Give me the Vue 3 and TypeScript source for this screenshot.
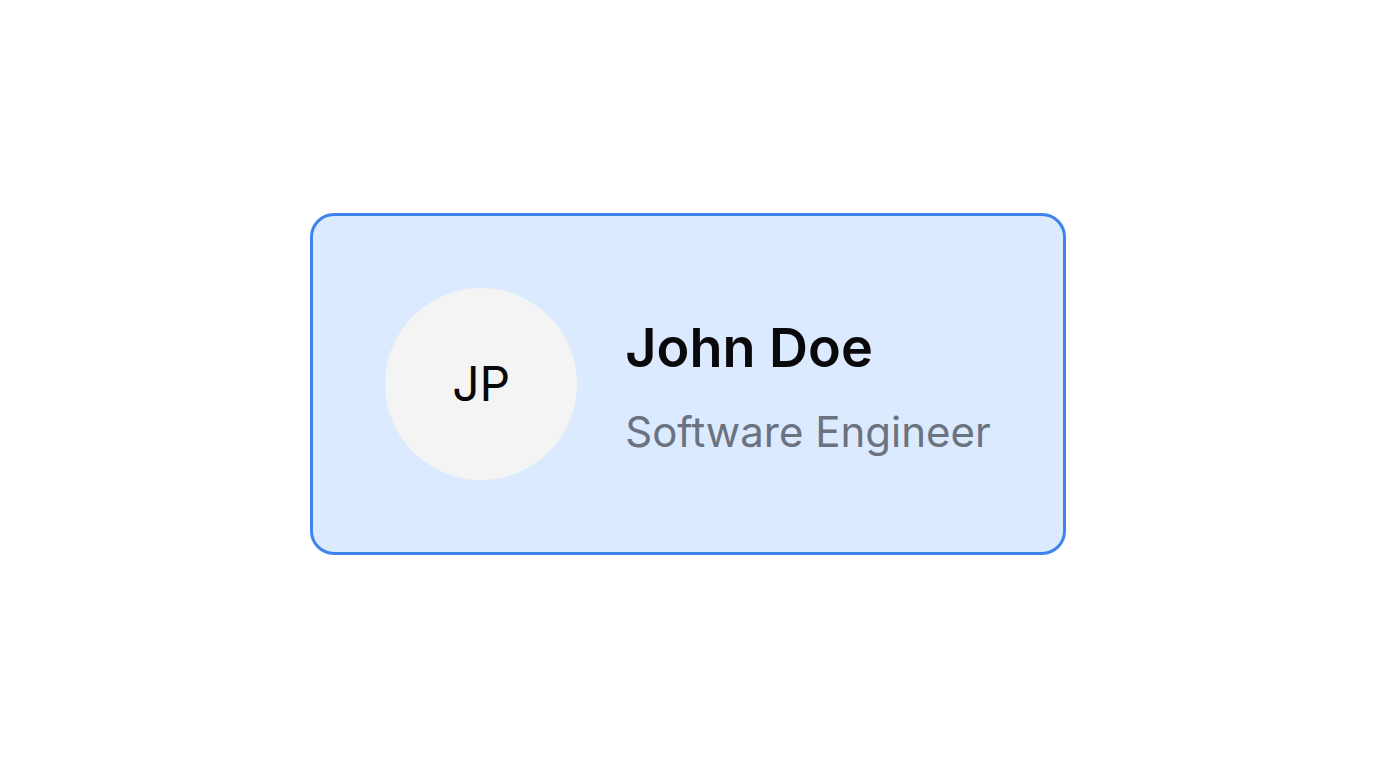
<script setup lang="ts">
interface Person {
  initials: string
  name: string
  role: string
}

const person: Person = {
  initials: 'JP',
  name: 'John Doe',
  role: 'Software Engineer',
}
</script>

<template>
  <main class="page">
    <article class="card">
      <div class="avatar" aria-hidden="true">{{ person.initials }}</div>
      <div class="details">
        <h1 class="name">{{ person.name }}</h1>
        <p class="role">{{ person.role }}</p>
      </div>
    </article>
  </main>
</template>

<style>
body {
  margin: 0;
  background: #ffffff;
}
</style>

<style scoped>
.page {
  min-height: 100vh;
  display: flex;
  align-items: center;
  justify-content: center;
  font-family: Inter, "Liberation Sans", sans-serif;
  color: #09090b;
}

.card {
  display: flex;
  align-items: center;
  gap: 48px;
  padding: 72px;
  border: 3px solid #3f83ec;
  border-radius: 24px;
  background: #dbeafe;
}

.avatar {
  flex: none;
  display: flex;
  align-items: center;
  justify-content: center;
  width: 192px;
  height: 192px;
  border-radius: 50%;
  background: #f4f4f4;
  font-size: 48px;
  line-height: 72px;
}

.details {
  display: flex;
  flex-direction: column;
  gap: 12px;
}

.name {
  margin: 0;
  font-size: 54px;
  font-weight: 600;
  line-height: 84px;
}

.role {
  margin: 0;
  font-size: 42px;
  line-height: 60px;
  color: #6b7280;
}
</style>
